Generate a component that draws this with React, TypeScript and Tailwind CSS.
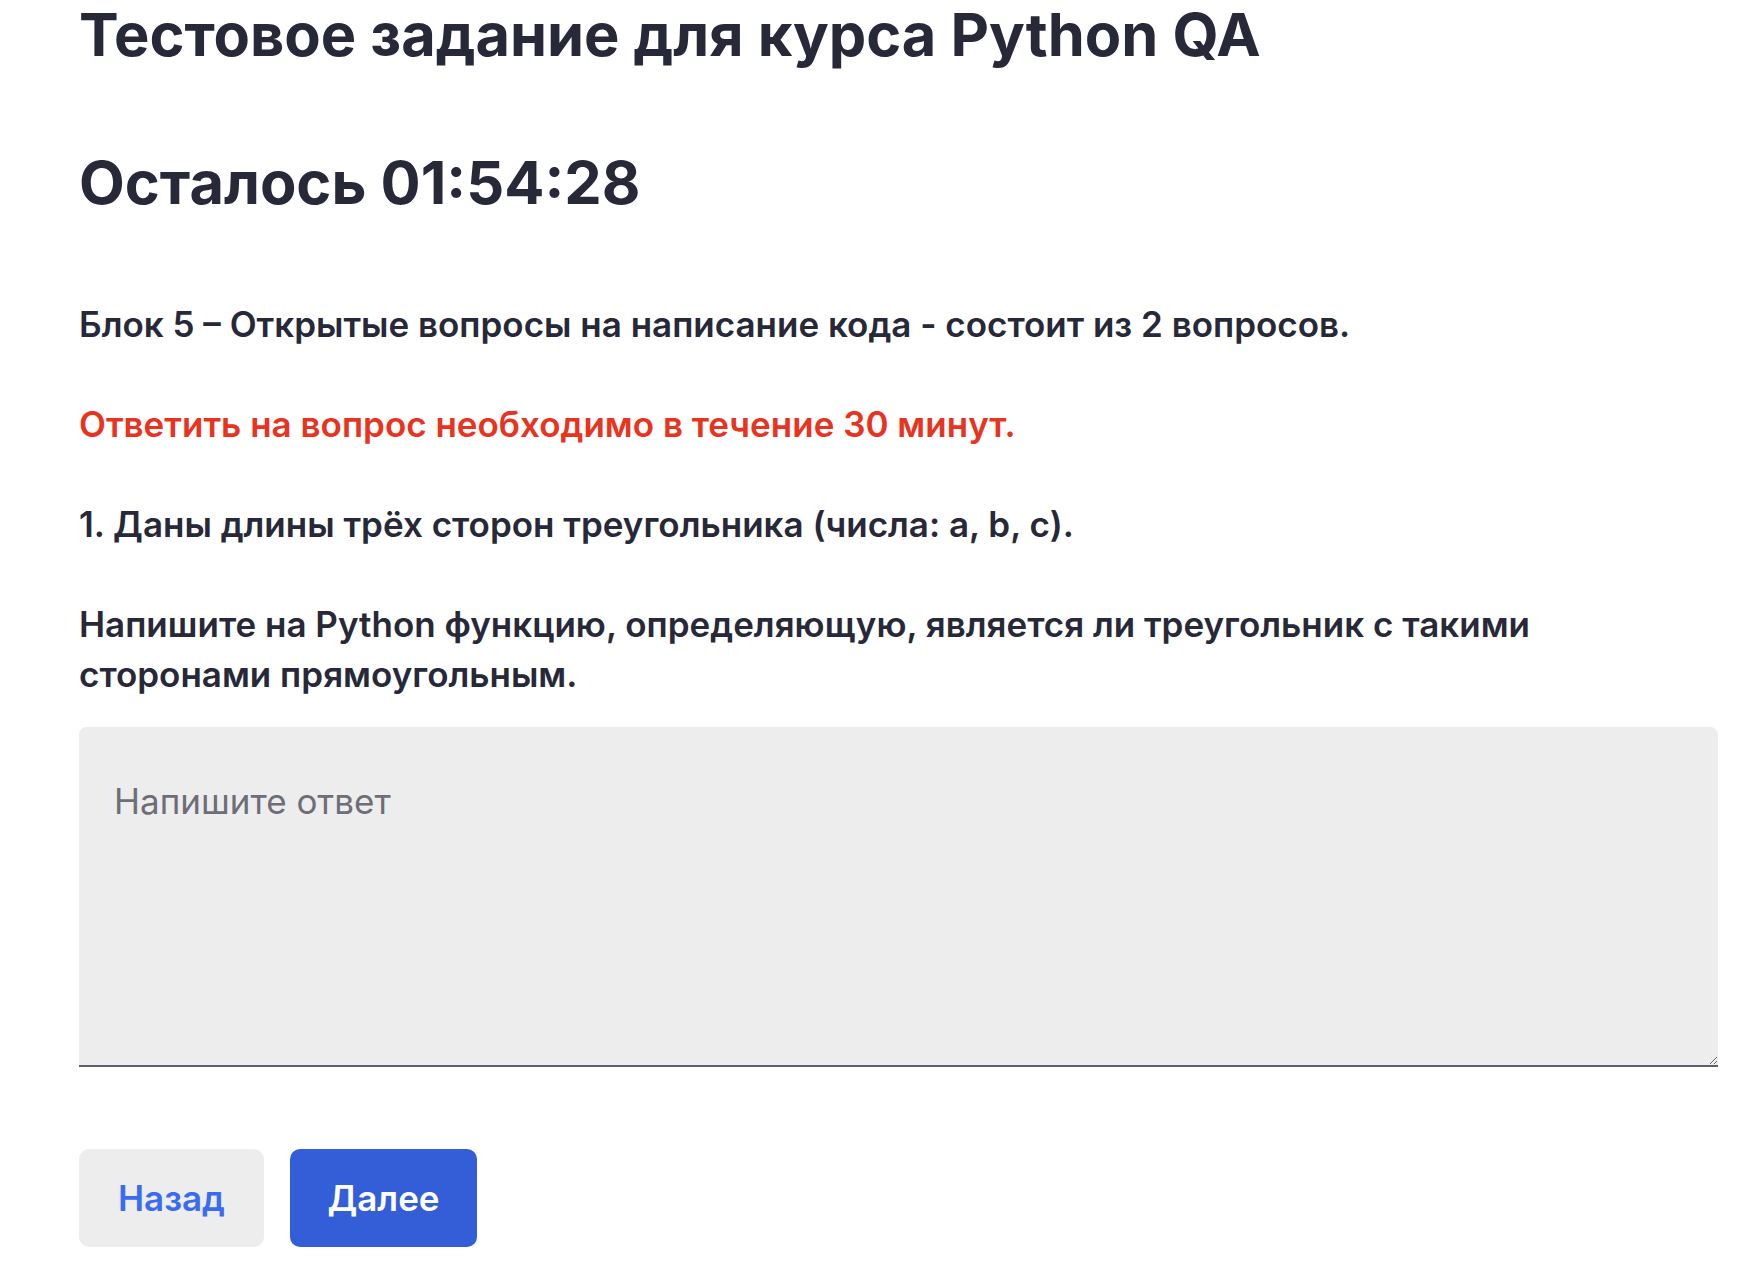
const paragraphs = [
    'Блок 5 – Открытые вопросы на написание кода - состоит из 2 вопросов.',
];

export default function App() {
    return (
        <div className="min-h-screen bg-white font-['Inter',sans-serif] text-[#272838]">
            <div className="w-full pl-[79px] pr-[46px]">
                <h1 className="text-[59.5px] font-bold leading-[68px]">
                    Тестовое задание для курса Python QA
                </h1>
                <h2 className="mt-[80px] text-[59.5px] font-bold leading-[68px]">Осталось 01:54:28</h2>

                <div className="mt-[83px] text-[35px] font-semibold leading-[50px]">
                    {paragraphs.map((p) => (
                        <p key={p}>{p}</p>
                    ))}
                    <p className="mt-[50px] text-[#e8331f]">Ответить на вопрос необходимо в течение 30 минут.</p>
                    <p className="mt-[50px]">1. Даны длины трёх сторон треугольника (числа: a, b, c).</p>
                    <p className="mt-[50px] max-w-[1580px]">
                        Напишите на Python функцию, определяющую, является ли треугольник с такими сторонами
                        прямоугольным.
                    </p>
                </div>

                <textarea
                    placeholder="Напишите ответ"
                    className="mt-[28px] block h-[340px] w-full rounded-t-[8px] border-b-2 border-[#5f5f6b] bg-[#ededed] px-[35px] py-[52px] text-[35px] leading-[44px] text-[#272838] outline-none placeholder:text-[#6e6d78]"
                />

                <div className="mt-[82px] flex gap-[26px]">
                    <button className="h-[98px] w-[185px] rounded-[10px] bg-[#ededed] text-[35px] font-semibold text-[#3a6cf0]">
                        Назад
                    </button>
                    <button className="h-[98px] w-[187px] rounded-[10px] bg-[#335ed8] text-[35px] font-semibold text-white">
                        Далее
                    </button>
                </div>
            </div>
        </div>
    );
}
